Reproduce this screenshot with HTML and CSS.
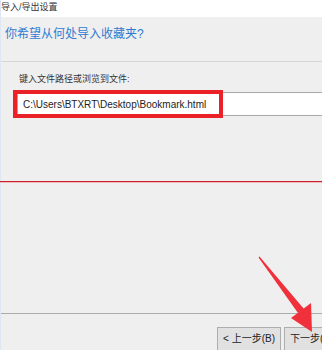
FILE: index.html
```html
<!DOCTYPE html>
<html>
  <head>
    <title>导入/导出设置</title>
    <link rel="stylesheet" href="styles.css">
  </head>
  <body>
    <div class="dialog">
      <div class="titlebar">导入/导出设置</div>
      <div class="header">
        <div class="header-title">你希望从何处导入收藏夹?</div>
      </div>
      <div class="content">
        <div class="field-label">键入文件路径或浏览到文件:</div>
        <div class="input-wrapper">
          <input class="path-input" value="C:\Users\BTXRT\Desktop\Bookmark.html" readonly />
          <div class="highlight-box"></div>
        </div>
        <div class="red-line"></div>
      </div>
      <div class="footer">
        <button class="dialog-btn">&lt; 上一步(B)</button>
        <button class="dialog-btn dialog-btn-next">下一步(</button>
      </div>
      <svg class="arrow" width="322" height="350" viewBox="0 0 322 350">
        <polygon points="257.5,257.5 258.5,256.5 303,309 297,313" fill="#f0303a" />
        <polygon points="311,332 290,318 310,303" fill="#f0303a" />
      </svg>
    </div>
  </body>
</html>
```

FILE: styles.css
```css
html, body {
  margin: 0;
  padding: 0;
}
body {
  width: 322px;
  height: 350px;
  overflow: hidden;
  background-color: #efefef;
  font-family: "Liberation Sans", "Noto Sans CJK SC", sans-serif;
}
.dialog {
  position: relative;
  width: 322px;
  height: 350px;
  border-left: 1px solid #dce7f3;
  box-sizing: border-box;
}
.titlebar {
  height: 17px;
  background-color: #fff;
  font-size: 9px;
  line-height: 14px;
  color: #333;
}
.header {
  height: 44px;
  background-color: #efefef;
  border-bottom: 1px solid #d6d6d6;
}
.header-title {
  padding-top: 9px;
  padding-left: 4px;
  font-size: 12px;
  line-height: 16px;
  color: #2f7bd1;
}
.content {
  height: 252px;
  padding-left: 16px;
  box-sizing: border-box;
  border-bottom: 1px solid #ababab;
}
.field-label {
  padding-top: 10px;
  padding-left: 2px;
  font-size: 9px;
  line-height: 14px;
  color: #333;
}
.input-wrapper {
  position: relative;
  margin-top: 6px;
  display: flex;
}
.path-input {
  flex: 1;
  height: 24px;
  box-sizing: border-box;
  border: 1px solid #a8a8a8;
  border-right: none;
  outline: none;
  padding: 0 0 0 5px;
  font-family: "Liberation Sans", sans-serif;
  font-size: 10px;
  color: #222;
  background-color: #fff;
}
.highlight-box {
  position: absolute;
  left: -4px;
  top: -2px;
  width: 210px;
  height: 28px;
  box-sizing: border-box;
  border: 4px solid #ea2228;
}
.red-line {
  margin-top: 65px;
  margin-left: -17px;
  height: 1px;
  background-color: #c81f2e;
  border-bottom: 1px solid #f3b9bd;
}
.footer {
  display: flex;
  gap: 3px;
  padding-top: 13px;
  padding-left: 216px;
}
.dialog-btn {
  flex: none;
  width: 64px;
  height: 24px;
  padding: 0 0 4px 0;
  background-color: #e1e1e1;
  border: 1px solid #adadad;
  font-family: "Liberation Sans", "Noto Sans CJK SC", sans-serif;
  font-size: 10px;
  color: #222;
  white-space: nowrap;
  text-align: center;
}
.dialog-btn-next {
  width: 38px;
  text-align: left;
  padding-left: 5px;
  border-right: none;
}
.arrow {
  position: absolute;
  left: 0;
  top: 0;
}
```
